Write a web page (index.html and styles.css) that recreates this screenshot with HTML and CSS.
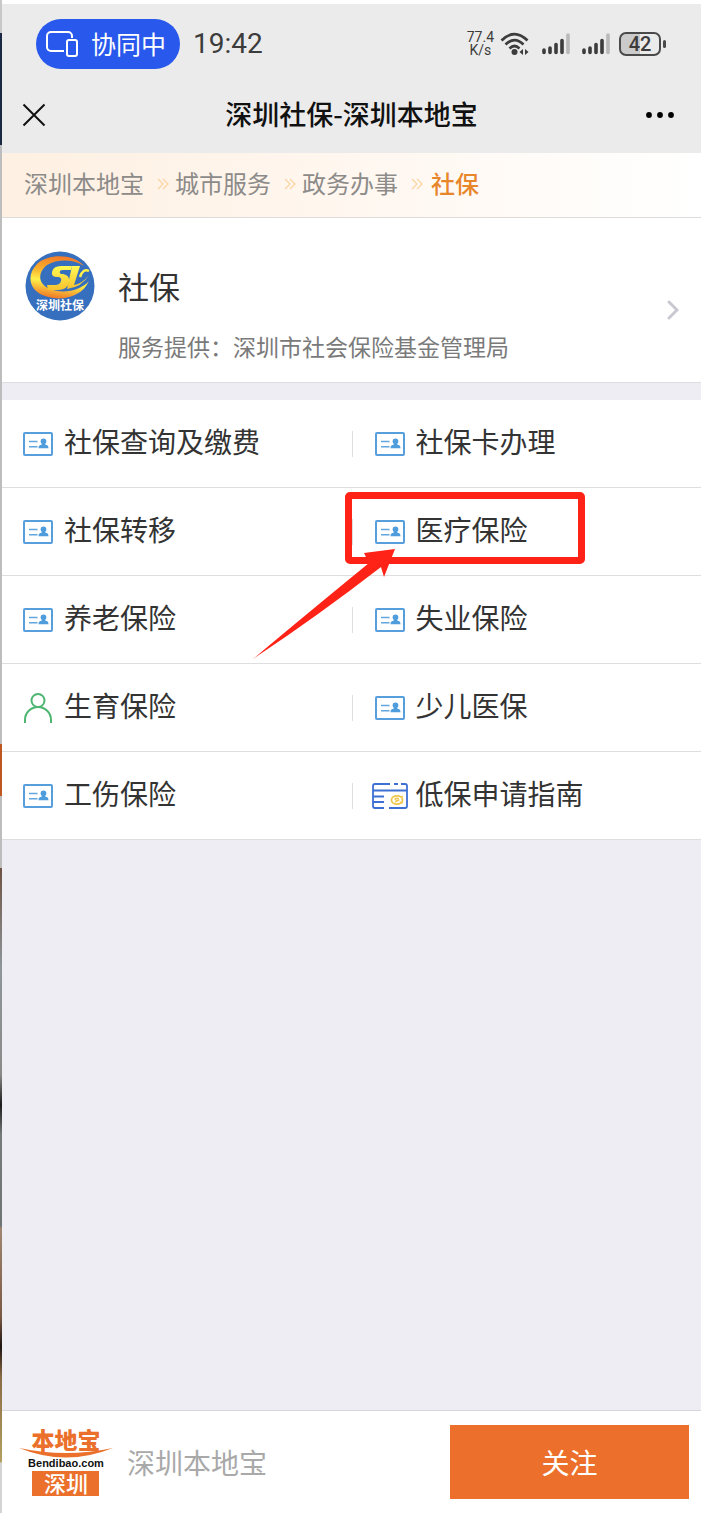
FILE: index.html
```html
<!DOCTYPE html>
<html lang="zh-CN">
<head>
<meta charset="utf-8">
<meta name="viewport" content="width=device-width, initial-scale=1">
<title>深圳社保-深圳本地宝</title>
<link rel="stylesheet" href="styles.css">
</head>
<body>
<svg class="defs" width="0" height="0" aria-hidden="true">
  <symbol id="card" viewBox="0 0 30 24">
    <rect x="1" y="1" width="28" height="22" rx="1" fill="none" stroke="#569fdc" stroke-width="2"/>
    <path d="M6 9.500h8.500M6 14.700h8.500" stroke="#62a6de" stroke-width="1.500"/>
    <path d="M20.500 6.500a2.900 2.900 0 0 1 2.900 2.900c0 1-.6 1.800-1.200 2.400v.8c1.900.4 3.300 1.200 3.300 3.600h-10c0-2.400 1.400-3.200 3.300-3.600v-.8c-.6-.6-1.200-1.400-1.200-2.400a2.900 2.900 0 0 1 2.900-2.900z" fill="#4f9ddd"/>
  </symbol>
  <symbol id="sep" viewBox="0 0 12 12">
    <path d="M1 1l5 5-5 5M6 1l5 5-5 5" fill="none" stroke="#fbd3a0" stroke-width="1.200"/>
  </symbol>
  <symbol id="signal" viewBox="0 0 28 24">
    <g stroke="#3c3c3c" stroke-width="3.600" stroke-linecap="round"><path d="M2 18v2.500M8 16v4.500M14 12.500v8M20 8.500v12"/></g>
    <path d="M26 3v17.500" stroke="#b9b9b9" stroke-width="3.600" stroke-linecap="round"/>
  </symbol>
</svg>
<div class="shell">
  <div class="edge"></div>
  <div class="app">
    <header class="top">
      <div class="status">
        <span class="pill">
          <svg width="32" height="28" viewBox="0 0 32 28" fill="none" stroke="#fff" stroke-width="2"><path d="M18 21H5a4 4 0 0 1-4-4V6a4 4 0 0 1 4-4h17a4 4 0 0 1 4 4v2"/><rect x="21" y="10" width="10" height="16" rx="2"/></svg>
          <span class="pill-label">协同中</span>
        </span>
        <time class="clock">19:42</time>
        <span class="speed"><span>77.4</span><span>K/s</span></span>
        <svg width="30" height="24" viewBox="0 0 30 24" fill="none" stroke="#3c3c3c" stroke-width="2.600"><path d="M1.500 8.500Q14.500-4.500 27.500 8.500M5.500 12.500Q14.500 3.500 23.500 12.500M9.500 16.500Q14.500 11.500 19.500 16.500"/><circle cx="14.500" cy="20" r="3" fill="#3c3c3c" stroke="none"/><path d="M23 17v6l-3.500-3zM25 17v6l3.500-3z" fill="#3c3c3c" stroke="none"/></svg>
        <svg class="bars" width="28" height="24"><use href="#signal"/></svg>
        <svg class="bars" width="28" height="24"><use href="#signal"/></svg>
        <span class="battery">42</span>
      </div>
      <div class="nav">
        <button class="icon-btn" type="button" aria-label="关闭"><svg width="24" height="24" viewBox="0 0 24 24"><path d="M1.500 1.500l21 21M22.500 1.500l-21 21" stroke="#111" stroke-width="2"/></svg></button>
        <h1 class="nav-title">深圳社保-深圳本地宝</h1>
        <button class="icon-btn more" type="button" aria-label="更多"><svg width="30" height="8" viewBox="0 0 30 8"><circle cx="4" cy="4" r="2.900"/><circle cx="15" cy="4" r="2.900"/><circle cx="26" cy="4" r="2.900"/></svg></button>
      </div>
    </header>
    <nav class="crumbs">
      <a href="#">深圳本地宝</a><svg class="sep" width="12" height="12"><use href="#sep"/></svg>
      <a href="#">城市服务</a><svg class="sep" width="12" height="12"><use href="#sep"/></svg>
      <a href="#">政务办事</a><svg class="sep" width="12" height="12"><use href="#sep"/></svg>
      <a class="current" href="#">社保</a>
    </nav>
    <a class="profile" href="#">
      <svg class="emblem" width="70" height="70" viewBox="0 0 70 70">
        <defs>
          <linearGradient id="ring" x1="0.500" y1="0" x2="0.300" y2="1"><stop offset="0" stop-color="#f47a25"/><stop offset=".35" stop-color="#fbb02c"/><stop offset=".6" stop-color="#fff04a"/><stop offset="1" stop-color="#ee6f22"/></linearGradient>
          <linearGradient id="gold" x1="0" y1="0" x2="0" y2="1"><stop offset="0" stop-color="#fffb55"/><stop offset="1" stop-color="#f8c12d"/></linearGradient>
        </defs>
        <circle cx="35" cy="35" r="34.500" fill="#356fbd"/>
        <path d="M59 15C49 3 24 2 12 13C1 24 4 40 20 45C36 51 57 46 64 30C55 40 38 43 25 38C13 33 12 22 22 14C33 8 48 8 59 15Z" fill="url(#ring)"/>
        <path d="M47 15L42 38Q57 36 64 24Q57 33 49 34L55 15Z" fill="url(#gold)"/>
        <path d="M55 26Q58 17 64 20" fill="none" stroke="#fff04a" stroke-width="2.500"/>
        <path d="M47 15H36Q28 15 27 21Q26 26 32 26H34Q37 27 36 30Q35 34 30 34H22L23 39H34Q43 38 44 31Q45 24 38 23H36Q34 22 35 20Q36 19 38 19H46Z" fill="url(#gold)"/>
        <text x="35" y="59" text-anchor="middle" class="emblem-text">深圳社保</text>
      </svg>
      <span class="profile-body">
        <span class="profile-name">社保</span>
        <span class="profile-by">服务提供：深圳市社会保险基金管理局</span>
      </span>
      <svg class="chevron" width="12" height="20" viewBox="0 0 12 20"><path d="M2 2l8 8-8 8" fill="none" stroke="#c9c8d0" stroke-width="3" stroke-linecap="round"/></svg>
    </a>
    <main class="menu">
      <a class="item" href="#"><span class="slot"><svg width="30" height="24"><use href="#card"/></svg></span>社保查询及缴费</a>
      <a class="item" href="#"><span class="slot"><svg width="30" height="24"><use href="#card"/></svg></span>社保卡办理</a>
      <a class="item" href="#"><span class="slot"><svg width="30" height="24"><use href="#card"/></svg></span>社保转移</a>
      <a class="item marked" href="#"><span class="slot"><svg width="30" height="24"><use href="#card"/></svg></span>医疗保险
        <span class="mark"></span>
        <svg class="arrow" width="142" height="110" viewBox="0 0 142 110"><path d="M142 0L111 4L116 14Q50 68 0 110Q66 66 128 18L131 28Z" fill="#ff2216"/></svg>
      </a>
      <a class="item" href="#"><span class="slot"><svg width="30" height="24"><use href="#card"/></svg></span>养老保险</a>
      <a class="item" href="#"><span class="slot"><svg width="30" height="24"><use href="#card"/></svg></span>失业保险</a>
      <a class="item" href="#"><span class="slot"><svg width="30" height="30" viewBox="0 0 30 30" fill="none" stroke="#4db672" stroke-width="2"><circle cx="15" cy="7.500" r="6.500"/><path d="M2 30V27a13 13 0 0 1 26 0v3"/></svg></span>生育保险</a>
      <a class="item" href="#"><span class="slot"><svg width="30" height="24"><use href="#card"/></svg></span>少儿医保</a>
      <a class="item" href="#"><span class="slot"><svg width="30" height="24"><use href="#card"/></svg></span>工伤保险</a>
      <a class="item" href="#"><span class="slot"><svg width="36" height="26" viewBox="0 0 36 26" fill="none" stroke="#3d70d2" stroke-width="1.800"><path d="M18 1H3Q1 1 1 3V23Q1 25 3 25H12M22 1h4M29 1h4Q35 1 35 3V23Q35 25 33 25H17M1 7.500H35M1 13.500H12M1 19H12"/><ellipse cx="25" cy="17" rx="5.500" ry="4.200" stroke="#edc64b"/><path d="M27 15.500q-4-1-4 .5t3 1-3 2M29 14l2-1M28 19l3 1" stroke="#edc64b" stroke-width="1.200"/></svg></span>低保申请指南</a>
    </main>
    <footer class="footer">
      <svg class="brand" width="96" height="74" viewBox="0 0 96 74">
        <text x="48" y="24" text-anchor="middle" class="brand-top">本地宝</text>
        <path d="M1 23Q48 33 95 23Q48 42 1 23Z" fill="#eb702b"/>
        <text x="48" y="42" text-anchor="middle" class="brand-url">Bendibao.com</text>
        <rect x="14" y="46" width="67" height="25" fill="#eb702b"/>
        <text x="48" y="67" text-anchor="middle" class="brand-city">深圳</text>
      </svg>
      <span class="account">深圳本地宝</span>
      <button class="follow" type="button">关注</button>
    </footer>
  </div>
</div>
</body>
</html>
```
FILE: styles.css
```css
* { box-sizing: border-box; }
body {
  margin: 0;
  background: #fff;
  color: #333;
  font-family: "Noto Sans CJK SC", sans-serif;
}
a { color: inherit; text-decoration: none; }
button { border: 0; padding: 0; font: inherit; cursor: pointer; }
svg { display: block; flex: none; }
.defs { position: absolute; }

.shell { display: flex; min-height: 100vh; }
.edge {
  flex: none;
  width: 2px;
  background: linear-gradient(#c8c8c8 0 2.2%, #1b2844 2.2% 9.6%, #bdbdbd 9.6% 49.2%, #bf5721 49.2% 52.6%, #bdbdbd 52.6% 57.4%, #6e5344 57.4%, #8d9699 64%, #8b8a88 71%, #1c1c1c 73%, #777b7b 75%, #6f7474 81%, #a08670 81.2%, #7b5a44 87%, #1f1512 89%, #8a6b45 91%, #b3a060 96.6%, #d4d4d4 96.7%);
}
.app {
  flex: 1;
  min-width: 0;
  display: flex;
  flex-direction: column;
  background: #eeedf3;
}

.top { background: #ebebeb; border-top: 4px solid #fff; padding-bottom: 18px; }
.status {
  display: flex;
  align-items: center;
  padding: 15px 40px 0 34px;
  color: #3c3c3c;
  font-family: Roboto, "Noto Sans CJK SC", sans-serif;
}
.pill {
  display: flex;
  align-items: center;
  gap: 13px;
  height: 50px;
  padding: 0 14px 0 10px;
  border-radius: 25px;
  background: #2858ec;
  color: #fff;
  font-size: 25px;
  white-space: nowrap;
}
.pill-label { padding-bottom: 3px; }
.clock { margin: 0 auto 0 13px; font-size: 28px; line-height: 32px; }
.speed {
  display: flex;
  flex-direction: column;
  align-items: center;
  margin-right: 6px;
  font-size: 14px;
  line-height: 13px;
}
.bars { margin-left: 12px; }
.battery {
  position: relative;
  margin-left: 9px;
  width: 42px;
  height: 24px;
  border: 2px solid #4a4a4a;
  border-radius: 7px;
  background: linear-gradient(90deg, #cbcbcb 50%, #ebebeb 50%);
  font-size: 20px;
  font-weight: 500;
  line-height: 21px;
  text-align: center;
}
.battery::after {
  content: "";
  position: absolute;
  right: -7px;
  top: 6px;
  width: 3px;
  height: 8px;
  border-radius: 2px;
  background: #4a4a4a;
}
.nav {
  display: grid;
  grid-template-columns: 60px 1fr 60px;
  align-items: center;
  margin-top: 26px;
  padding: 0 26px 0 20px;
}
.icon-btn { background: none; }
.more { justify-self: end; }
.nav-title {
  margin: 0;
  padding: 0 0 2px 6px;
  color: #111;
  font-size: 27px;
  font-weight: 500;
  line-height: 38px;
  text-align: center;
}

.crumbs {
  display: flex;
  align-items: center;
  height: 65px;
  padding: 0 22px 6px;
  border-bottom: 1px solid #dedcda;
  background: linear-gradient(90deg, #fef0e2, #fff6ee 45%, #fff);
  color: #8d8b89;
  font-size: 24px;
  white-space: nowrap;
}
.sep { margin: 4px 6px 0 13px; }
.current { color: #e8862b; font-weight: 500; margin-left: 2px; }

.profile {
  display: flex;
  align-items: flex-start;
  height: 165px;
  padding: 33px 22px 0 23px;
  border-bottom: 1px solid #dedede;
  background: #fff;
}
.emblem-text { font-size: 12px; font-weight: 700; fill: #fff; }
.profile-body { flex: 1; padding-left: 23px; }
.profile-name, .profile-by { display: block; }
.profile-name { padding-top: 12px; font-size: 31px; line-height: 46px; }
.profile-by { padding-top: 20px; color: #7a7a7a; font-size: 23px; line-height: 34px; white-space: nowrap; }
.chevron { margin-top: 49px; }

.menu {
  display: grid;
  grid-template-columns: 1fr 1fr;
  margin-top: 17px;
  background: #fff;
}
.item {
  position: relative;
  display: flex;
  align-items: center;
  height: 88px;
  padding: 0 0 6px 18px;
  border-bottom: 1px solid #dedede;
  font-size: 28px;
  white-space: nowrap;
}
.item:nth-child(even) { padding-left: 0; }
.item:nth-child(even)::before {
  content: "";
  width: 1px;
  height: 26px;
  margin: 6px 19px 0 0;
  background: #dedede;
}
.slot { display: flex; justify-content: center; width: 36px; margin: 6px 8px 0 0; }
.marked { z-index: 1; }
.mark {
  position: absolute;
  left: -7px;
  top: 4px;
  width: 240px;
  height: 72px;
  border: 7px solid #ff2216;
  border-radius: 5px;
}
.arrow { position: absolute; left: -99px; top: 61px; }

.footer {
  display: flex;
  align-items: center;
  margin-top: auto;
  padding: 14px 12px 14px 16px;
  border-top: 1px solid #d8d8dc;
  background: #fff;
}
.brand { overflow: visible; }
.brand-top { font-size: 23px; font-weight: 900; fill: #eb702b; }
.brand-url { font-family: "Liberation Sans", sans-serif; font-size: 11px; font-weight: 700; fill: #111; }
.brand-city { font-size: 22px; font-weight: 500; fill: #fff; }
.account { flex: 1; padding-left: 13px; color: #a9a9a9; font-size: 28px; }
.follow {
  width: 239px;
  height: 74px;
  background: #ec702b;
  color: #fff;
  font-size: 28px;
}
```
